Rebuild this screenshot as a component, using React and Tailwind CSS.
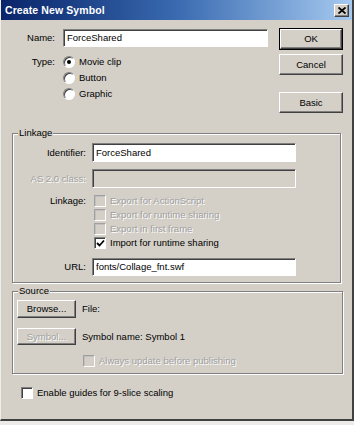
import React from "react";

const raised =
  "border border-t-white border-l-white border-r-[#404040] border-b-[#404040] shadow-[inset_-1px_-1px_0_#808080]";
const sunken =
  "border border-t-[#808080] border-l-[#808080] border-r-white border-b-white shadow-[inset_1px_1px_0_#404040]";
const etched = "border border-[#808080] shadow-[inset_1px_1px_0_#fff,1px_1px_0_#fff]";

function Button({ children, className = "", def = false, disabled = false }) {
  const inner = (
    <div
      className={`${raised} flex items-center justify-center w-full h-full bg-[#d4d0c8] ${
        disabled ? "text-[#a0a0a0] [text-shadow:1px_1px_0_#fff]" : "text-black"
      }`}
    >
      {children}
    </div>
  );
  if (def) {
    return <div className={`border border-black ${className}`}>{inner}</div>;
  }
  return <div className={className}>{inner}</div>;
}

function Radio({ checked, label }) {
  return (
    <div className="flex items-center h-[16px]">
      <div className="w-[12px] h-[12px] rounded-full bg-white border border-t-[#808080] border-l-[#808080] border-r-white border-b-white shadow-[inset_1px_1px_0_#404040] flex items-center justify-center">
        {checked && <div className="w-[4px] h-[4px] rounded-full bg-black" />}
      </div>
      <span className="ml-[4px]">{label}</span>
    </div>
  );
}

function Check({ checked, disabled, label, className = "" }) {
  return (
    <div className={`flex items-center h-[14px] ${className}`}>
      <div
        className={`w-[12px] h-[12px] border ${
          disabled
            ? "border-t-[#a0a0a0] border-l-[#a0a0a0] border-r-white border-b-white bg-[#d4d0c8] shadow-[inset_1px_1px_0_#c0c0c0]"
            : "border-t-[#808080] border-l-[#808080] border-r-white border-b-white bg-white shadow-[inset_1px_1px_0_#404040]"
        } flex items-center justify-center`}
      >
        {checked && (
          <svg width="9" height="9" viewBox="0 0 9 9">
            <path d="M1 4 L3.5 6.5 L8 1.5" stroke="#000" strokeWidth="1.8" fill="none" />
          </svg>
        )}
      </div>
      <span
        className={`ml-[4px] ${disabled ? "text-[#a0a0a0] [text-shadow:1px_1px_0_#fff]" : "text-black"}`}
      >
        {label}
      </span>
    </div>
  );
}

function Input({ value, className = "", disabled = false }) {
  return (
    <div
      className={`${sunken} ${disabled ? "bg-[#d4d0c8]" : "bg-white"} flex items-center px-[3px] ${className}`}
    >
      {value}
    </div>
  );
}

function Group({ title, className = "", children }) {
  return (
    <div className={`relative ${etched} ${className}`}>
      <span className="absolute left-[5px] top-[-8px] bg-[#d4d0c8] px-[1px] leading-[14px]">{title}</span>
      {children}
    </div>
  );
}

export default function App() {
  return (
    <div className="w-[354px] h-[425px] bg-[#ecebe8] [font-family:'Liberation_Sans',Arial,sans-serif] text-[9.5px] text-black leading-none">
      <div className="w-[354px] h-[421px] bg-[#d4d0c8] flex flex-col border-l border-l-[#eeeeee] border-r-2 border-r-[#404040] border-b-2 border-b-[#404040]">
        {/* Title bar */}
        <div className="h-[20px] flex items-center bg-gradient-to-r from-[#0a246a] via-[#3a6ab0] to-[#a6caf0] pl-[4px] pr-[3px]">
          <span className="text-white font-bold text-[10.5px] tracking-[0.1px]">Create New Symbol</span>
          <div className={`ml-auto w-[15px] h-[13px] ${raised} bg-[#d4d0c8] flex items-center justify-center`}>
            <svg width="8" height="7" viewBox="0 0 8 7">
              <path d="M0.5 0.5 L7.5 6.5 M7.5 0.5 L0.5 6.5" stroke="#000" strokeWidth="1.8" />
            </svg>
          </div>
        </div>

        {/* Top section */}
        <div className="flex items-start">
          <div className="flex flex-col mt-[9px]">
            <div className="flex items-center h-[18px]">
              <span className="w-[54px] text-right">Name:</span>
              <Input value="ForceShared" className="ml-[8px] w-[205px] h-[18px]" />
            </div>
            <div className="flex mt-[7px]">
              <span className="w-[54px] text-right h-[16px] flex items-center justify-end">Type:</span>
              <div className="ml-[8px] flex flex-col">
                <Radio checked label="Movie clip" />
                <Radio label="Button" />
                <Radio label="Graphic" />
              </div>
            </div>
          </div>
          <div className="ml-auto mr-[9px] w-[64px] flex flex-col">
            <Button def className="mt-[8px] h-[22px]">OK</Button>
            <Button className="mt-[4px] h-[21px]">Cancel</Button>
            <Button className="mt-[17px] h-[21px]">Basic</Button>
          </div>
        </div>

        {/* Linkage group */}
        <Group title="Linkage" className="mt-[20px] ml-[11px] w-[329px] h-[150px]">
          <div className="flex flex-col pt-[9px]">
            <div className="flex items-center h-[19px]">
              <span className="w-[73px] text-right">Identifier:</span>
              <Input value="ForceShared" className="ml-[6px] w-[204px] h-[19px]" />
            </div>
            <div className="flex items-center h-[19px] mt-[7px]">
              <span className="w-[73px] text-right text-[#a0a0a0] [text-shadow:1px_1px_0_#fff]">AS 2.0 class:</span>
              <Input value="" disabled className="ml-[6px] w-[204px] h-[19px]" />
            </div>
            <div className="flex mt-[6px]">
              <span className="w-[73px] text-right h-[14px] flex items-center justify-end">Linkage:</span>
              <div className="ml-[8px] flex flex-col">
                <Check disabled label="Export for ActionScript" />
                <Check disabled label="Export for runtime sharing" />
                <Check disabled label="Export in first frame" />
                <Check checked label="Import for runtime sharing" />
              </div>
            </div>
            <div className="flex items-center h-[18px] mt-[8px]">
              <span className="w-[73px] text-right">URL:</span>
              <Input value="fonts/Collage_fnt.swf" className="ml-[6px] w-[204px] h-[18px]" />
            </div>
          </div>
        </Group>

        {/* Source group */}
        <Group title="Source" className="mt-[8px] ml-[11px] w-[331px] h-[83px]">
          <div className="flex flex-col pt-[8px] pl-[4px]">
            <div className="flex items-center">
              <Button className="w-[59px] h-[18px]">Browse...</Button>
              <span className="ml-[6px]">File:</span>
            </div>
            <div className="flex items-center mt-[10px]">
              <Button disabled className="w-[59px] h-[17px]">Symbol...</Button>
              <span className="ml-[6px]">Symbol name: Symbol 1</span>
            </div>
            <Check disabled label="Always update before publishing" className="mt-[9px] ml-[66px]" />
          </div>
        </Group>

        <Check label="Enable guides for 9-slice scaling" className="mt-[12px] ml-[20px]" />
      </div>
    </div>
  );
}
